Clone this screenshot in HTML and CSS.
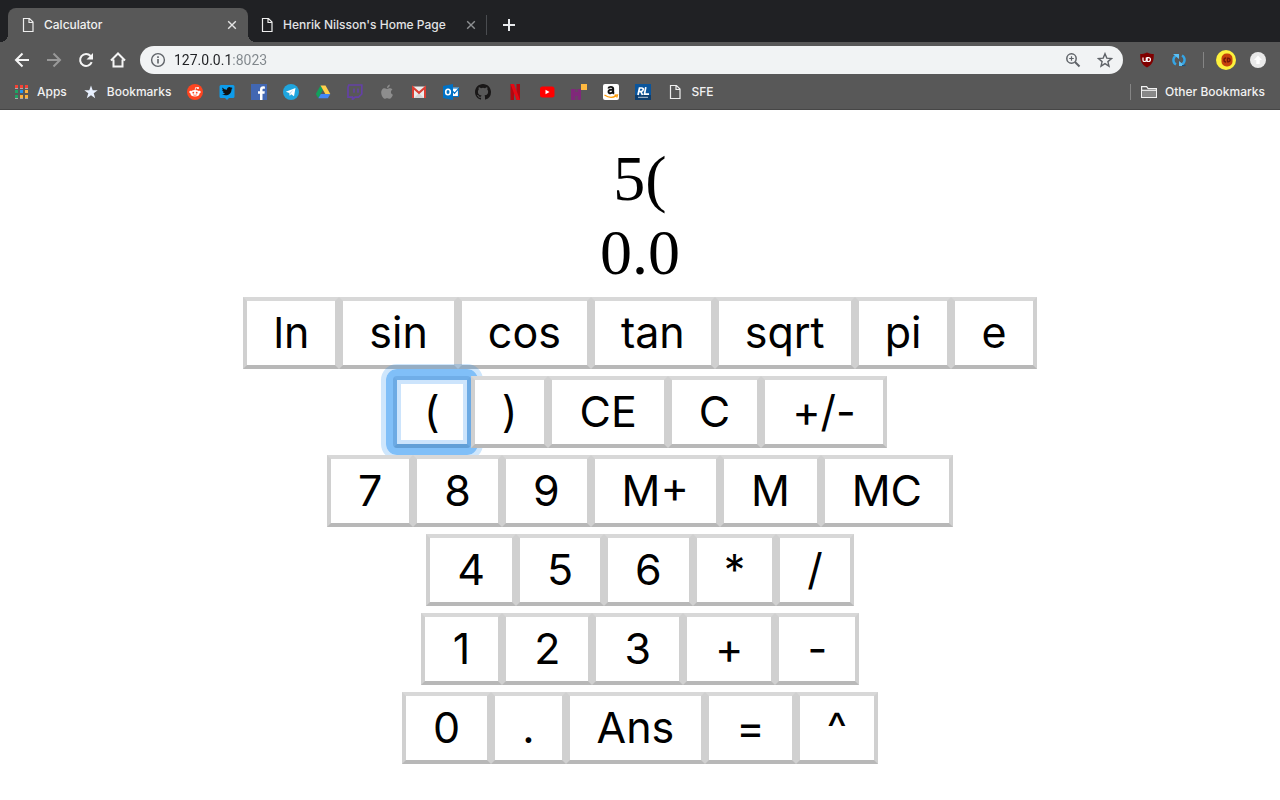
FILE: index.html
```html
<!DOCTYPE html>
<html lang="en">
<head>
<meta charset="utf-8">
<title>Calculator</title>
<link rel="stylesheet" href="styles.css">
</head>
<body>
<svg class="defs" aria-hidden="true">
  <symbol id="doc" viewBox="0 0 16 16"><path d="M3.5 1.5h6l3.500 3.500v9.500h-9.500zM9 1.500v4h4" fill="none" stroke="#eee" stroke-width="1.200"/></symbol>
  <symbol id="close" viewBox="0 0 16 16"><path d="M4.200 4.200l7.600 7.600M11.800 4.200l-7.600 7.600" fill="none" stroke="currentColor" stroke-width="1.400"/></symbol>
</svg>

<header class="browser">
  <nav class="tabs" aria-label="Tabs">
    <div class="tab tab-active">
      <svg class="icon"><use href="#doc"/></svg>
      <span class="tab-title">Calculator</span>
      <button class="icon-btn" aria-label="Close Calculator"><svg class="icon"><use href="#close"/></svg></button>
    </div>
    <div class="tab">
      <svg class="icon"><use href="#doc"/></svg>
      <span class="tab-title">Henrik Nilsson's Home Page</span>
      <button class="icon-btn dim" aria-label="Close Home Page"><svg class="icon"><use href="#close"/></svg></button>
    </div>
    <span class="divider"></span>
    <button class="icon-btn new-tab" aria-label="New tab"><svg class="icon" viewBox="0 0 16 16"><path d="M8 2v12M2 8h12" stroke="#e8eaed" stroke-width="2"/></svg></button>
  </nav>

  <div class="toolbar">
    <button class="icon-btn" aria-label="Back"><svg class="icon" viewBox="0 0 16 16"><path d="M15 8H2.500M8.500 1.500L2 8l6.500 6.500" fill="none" stroke="#f5f5f5" stroke-width="2"/></svg></button>
    <button class="icon-btn" aria-label="Forward"><svg class="icon" viewBox="0 0 16 16"><path d="M1 8h12.500M7.500 1.500L14 8l-6.500 6.500" fill="none" stroke="#999" stroke-width="2"/></svg></button>
    <button class="icon-btn" aria-label="Reload"><svg class="icon" viewBox="0 0 16 16"><path d="M13.700 10.200A6 6 0 1 1 12.600 4" fill="none" stroke="#f5f5f5" stroke-width="2"/><path d="M15 1v6.500H8.500z" fill="#f5f5f5"/></svg></button>
    <button class="icon-btn" aria-label="Home"><svg class="icon" viewBox="0 0 16 16"><path d="M1 8.500L8 1.500l7 7M3.500 7.500v7h9v-7" fill="none" stroke="#f5f5f5" stroke-width="2"/></svg></button>
    <div class="omnibox">
      <svg class="icon" viewBox="0 0 16 16"><circle cx="8" cy="8" r="6.400" fill="none" stroke="#5f6368" stroke-width="1.400"/><path d="M8 7v4.600M8 4.200v1.700" stroke="#5f6368" stroke-width="1.600"/></svg>
      <input class="address" type="text" aria-label="Address" value="127.0.0.1:8023">
      <button class="icon-btn" aria-label="Zoom"><svg class="icon" viewBox="0 0 16 16"><circle cx="6.500" cy="6.500" r="4.700" fill="none" stroke="#5f6368" stroke-width="1.500"/><path d="M10 10l4.500 4.500" stroke="#5f6368" stroke-width="2"/><path d="M6.500 4.200v4.600M4.200 6.500h4.600" stroke="#5f6368" stroke-width="1.200"/></svg></button>
      <button class="icon-btn" aria-label="Bookmark this page"><svg class="icon" viewBox="0 0 16 16"><path d="M8 1.700l1.800 4.400 4.700.4-3.600 3.100 1.100 4.600L8 11.700l-4 2.500 1.100-4.600L1.500 6.500l4.700-.4z" fill="none" stroke="#5f6368" stroke-width="1.400"/></svg></button>
    </div>
    <button class="icon-btn" aria-label="Content blocker"><svg class="icon" viewBox="0 0 16 16"><path d="M8 .5c2.500 1.500 4.500 1.500 6.800 1.500 0 7-.8 10-6.800 13.500C2 12 1.200 9 1.200 2 3.500 2 5.500 2 8 .5z" fill="#800000"/><path d="M4 5.500v2.700q0 1.300 1.600 1.300T7.300 8.200V5.500M8.200 5.600v3.900h1.300a1.950 1.950 0 0 0 0-3.900z" fill="none" stroke="#fff" stroke-width="1.200"/></svg></button>
    <button class="icon-btn" aria-label="Sync"><svg class="icon" viewBox="0 0 16 16"><path d="M5 12.500A5 5 0 0 1 5.500 3.500M11 3.500a5 5 0 0 1-.5 9" fill="none" stroke="#35a5e5" stroke-width="2.400"/><path d="M2 2h6v5zM14 14H8V9z" fill="#5bc0f5"/><path d="M11 13.500h3.500" stroke="#16517f" stroke-width="1.200"/></svg></button>
    <span class="divider short"></span>
    <button class="icon-btn avatar" aria-label="Profile"><svg class="icon-lg" viewBox="0 0 20 20"><circle cx="10" cy="10" r="10" fill="#fdf13c"/><rect x="5.500" y="3.500" width="11" height="13" rx="5" fill="#c5420c"/><path d="M10 8a2 2 0 1 0 0 4M11.500 8.200v3.600h.8a1.800 1.800 0 0 0 0-3.600z" fill="none" stroke="#741707" stroke-width="1.400"/></svg></button>
    <button class="icon-btn" aria-label="Update"><svg class="icon" viewBox="0 0 16 16"><circle cx="8" cy="8" r="8" fill="#e9e9e9"/><path d="M8 3.500l4 4.500H9.700v4H6.300V8H4z" fill="#fff"/></svg></button>
  </div>

  <nav class="bookmarks" aria-label="Bookmarks">
    <a class="mark" href="#"><svg class="icon" viewBox="0 0 16 16"><path d="M2 1h3v3H2zM7 1h3v3H7zM12 1h3v3h-3z" fill="#f44336"/><path d="M2 6h3v3H2z" fill="#1fa463"/><path d="M7 6h3v3H7z" fill="#2196f3"/><path d="M12 6h3v3h-3z" fill="#fbb13c"/><path d="M2 11h3v3H2z" fill="#1fa463"/><path d="M7 11h3v3H7zM12 11h3v3h-3z" fill="#fbb13c"/><path d="M2 4.500h3M7 4.500h3M12 4.500h3M2 14.500h3M7 14.500h3M12 14.500h3" stroke="#aaa"/></svg><span class="mark-text">Apps</span></a>
    <a class="mark" href="#"><svg class="icon" viewBox="0 0 16 16"><path d="M8 1.500l1.700 4.700 5 .1-4 3 1.500 4.900L8 11.300l-4.200 2.900 1.500-4.900-4-3 5-.1z" fill="#e8f0fe"/></svg><span class="mark-text">Bookmarks</span></a>
    <a class="mark" href="#" aria-label="Reddit"><svg class="icon" viewBox="0 0 16 16"><circle cx="8" cy="8" r="8" fill="#ff4520"/><ellipse cx="8" cy="9.300" rx="4.500" ry="3.200" fill="#fff"/><circle cx="3.500" cy="8" r="1.200" fill="#fff"/><circle cx="12.500" cy="8" r="1.200" fill="#fff"/><circle cx="11" cy="4" r="1" fill="#fff"/><path d="M8 6.500l.6-3 2.400.5" fill="none" stroke="#fff" stroke-width=".8"/><circle cx="6.300" cy="8.700" r=".9" fill="#ff4520"/><circle cx="9.700" cy="8.700" r=".9" fill="#ff4520"/><path d="M6.200 10.800q1.800 1.100 3.600 0" fill="none" stroke="#ff4520" stroke-width=".7"/></svg></a>
    <a class="mark" href="#" aria-label="Twitter"><svg class="icon" viewBox="0 0 16 16"><path d="M2 1h12q1.500 0 1.500 1.500v10q0 1.500-1.500 1.500h-4l-2 2-2-2H2Q.5 14 .5 12.500v-10Q.5 1 2 1z" fill="#0d9ceb"/><path d="M3.500 3.500c1.300 1.500 2.700 2.200 4.500 2.300-.2-3 3-3.400 4-2.100l1.300-.4-.7 1.200 1-.2-1.100 1.200c0 5.500-5.500 7-9.500 4.800 1.300 0 2.200-.2 3-.9-1.200-.2-1.700-.8-2-1.500h.9C3.700 7.300 3.300 6.700 3.200 5.700l.9.200C3.200 5.200 3.100 4.400 3.500 3.500z" fill="#111"/></svg></a>
    <a class="mark" href="#" aria-label="Facebook"><svg class="icon" viewBox="0 0 16 16"><path d="M0 0h16v16H0z" fill="#4267b2"/><path d="M9 16V9.800H7V7.300h2V5.500C9 3.300 10.300 2.300 12.200 2.300l1.700.1v2.300h-1.200c-1 0-1.200.5-1.200 1.200v1.400h2.300l-.3 2.500h-2V16z" fill="#fff"/></svg></a>
    <a class="mark" href="#" aria-label="Telegram"><svg class="icon" viewBox="0 0 16 16"><circle cx="8" cy="8" r="8" fill="#1fa5de"/><path d="M2.800 7.800L12.500 3.900 11 12.200 8.200 10.200 6.800 11.700 6.300 9z" fill="#fff"/><path d="M6.300 9l4.200-3.200-3 3.700-.7 2.200z" fill="#b5d9ed"/></svg></a>
    <a class="mark" href="#" aria-label="Drive"><svg class="icon" viewBox="0 0 16 16"><path d="M5.500 1.500L.8 10l2.500 4.300L8 5.700z" fill="#12a05c"/><path d="M5.500 1.500h5l4.800 8.500h-5z" fill="#ffcf4a"/><path d="M5.800 10h9.500l-2.500 4.300H3.300z" fill="#4387f5"/></svg></a>
    <a class="mark" href="#" aria-label="Twitch"><svg class="icon" viewBox="0 0 16 16"><path d="M1.800 1h13v9l-3.300 3.200H8L5.500 15.500v-2.300H1V3.500z" fill="none" stroke="#6441a5" stroke-width="1.700"/><path d="M7 4.500v4.300M11 4.500v4.300" stroke="#6441a5" stroke-width="1.500"/></svg></a>
    <a class="mark" href="#" aria-label="Apple"><svg class="icon" viewBox="0 0 16 16"><path d="M8 5C9.500 4.500 10.200 4 11.500 4.300q1.300.2 2 1.200c-2.300 1.300-2 4.300.4 5.200-.7 2-2 4-3.400 4-1 0-1.300-.5-2.400-.5s-1.500.5-2.400.5c-1.800 0-5-5.800-2.700-9C4.200 4 5.800 4 8 5zM8 4c0-2 1.200-3.300 2.800-3.600C11 2.400 9.700 4 8 4z" fill="#8e8e8e"/></svg></a>
    <a class="mark" href="#" aria-label="Gmail"><svg class="icon" viewBox="0 0 16 16"><path d="M1 2.500h14v11.500H1z" fill="#ececec"/><path d="M3 14l5-5 5 5z" fill="#d5d5d5"/><path d="M2 14V3.500l6 5.300 6-5.300V14" fill="none" stroke="#d93f34" stroke-width="2"/></svg></a>
    <a class="mark" href="#" aria-label="Outlook"><svg class="icon" viewBox="0 0 16 16"><path d="M9 3.500h7v9H9z" fill="#fff"/><path d="M9 4h7M9.500 7l2 2.300L16 4.200M15.500 4v8.500H9" fill="none" stroke="#0072c6" stroke-width="1.200"/><path d="M0 2l10-2v16L0 14z" fill="#0072c6"/><ellipse cx="5" cy="8" rx="2.300" ry="2.800" fill="none" stroke="#fff" stroke-width="1.600"/></svg></a>
    <a class="mark" href="#" aria-label="GitHub"><svg class="icon" viewBox="0 0 16 16"><path d="M8 0C3.580 0 0 3.580 0 8c0 3.540 2.290 6.530 5.470 7.590.4.070.55-.17.550-.38 0-.19-.010-.82-.010-1.490-2.010.37-2.530-.49-2.690-.94-.09-.23-.48-.94-.82-1.130-.28-.15-.68-.52-.010-.53.63-.010 1.080.58 1.230.82.72 1.210 1.870.87 2.330.66.070-.52.280-.87.510-1.070-1.780-.2-3.640-.89-3.640-3.950 0-.87.310-1.590.82-2.150-.08-.2-.36-1.020.080-2.120 0 0 .67-.21 2.200.82a7.600 7.600 0 0 1 4 0c1.530-1.040 2.200-.82 2.200-.82.44 1.100.16 1.920.080 2.120.51.560.82 1.270.82 2.150 0 3.070-1.870 3.750-3.650 3.950.29.250.54.730.54 1.480 0 1.070-.010 1.930-.010 2.200 0 .21.150.46.550.38A8 8 0 0 0 16 8c0-4.420-3.580-8-8-8z" fill="#191717"/></svg></a>
    <a class="mark" href="#" aria-label="Netflix"><svg class="icon" viewBox="0 0 16 16"><path d="M3.500 0H7v16H3.500zM9.500 0H13v16H9.500z" fill="#b20710"/><path d="M3.500 0H7l6 16H9.500z" fill="#e50914"/></svg></a>
    <a class="mark" href="#" aria-label="YouTube"><svg class="icon" viewBox="0 0 16 16"><rect x="1" y="2.500" width="14.500" height="11" rx="2.500" fill="#f00"/><path d="M6.500 5.800v4.400L10.500 8z" fill="#fff"/></svg></a>
    <a class="mark" href="#" aria-label="Pixels"><svg class="icon" viewBox="0 0 16 16"><path d="M10 0h6v6h-6z" fill="#ffb940"/><path d="M0 5h4v3h3V5h3v11H7v-4H4v4H0z" fill="#80287a"/><path d="M4 5h3v3H4zM4 12h3v4H4z" fill="#6b3f68"/></svg></a>
    <a class="mark" href="#" aria-label="Amazon"><svg class="icon" viewBox="0 0 16 16"><rect width="16" height="16" rx="2" fill="#fff"/><path d="M5.300 4.400c.6-2 4.700-2.100 4.900.2v3.700q0 .8.800 1.400M10 5.500c-2.500 0-4.500.5-4.500 2.300 0 2.200 3.500 2 4.500-.5" fill="none" stroke="#111" stroke-width="1.900"/><path d="M1.500 11q6 4.200 11.500.9M11.500 11.200l3-.2-.8 2.500" fill="none" stroke="#ff9900" stroke-width="1.300"/></svg></a>
    <a class="mark" href="#" aria-label="RL"><svg class="icon" viewBox="0 0 16 16"><path d="M0 0h16v16H0z" fill="#0a559c"/><path d="M0 11h16v5H0z" fill="#0b3e70"/><path d="M3 11L4.500 4h2.300q1.700 0 1.400 1.700T6.200 7.500H4M6 7.800L7.500 11M10.800 3.200L9.500 10.200h4.500" fill="none" stroke="#fff" stroke-width="1.700"/><path d="M3 13.300h10" stroke="#b8c6d5" stroke-width="1"/></svg></a>
    <a class="mark" href="#"><svg class="icon"><use href="#doc"/></svg><span class="mark-text">SFE</span></a>
    <span class="divider short push"></span>
    <a class="mark other" href="#"><svg class="icon" viewBox="0 0 16 16"><path d="M.6 13.400V2.600h5l1.500 2h8.300v8.800z" fill="none" stroke="#f1f1f1" stroke-width="1.200"/><path d="M1.200 7h13.600v5.800H1.200z" fill="#888"/><path d="M1 6.300h14" stroke="#f1f1f1" stroke-width="1.200"/></svg><span class="mark-text">Other Bookmarks</span></a>
  </nav>
</header>

<main class="calculator">
  <output class="display">5(</output>
  <output class="display">0.0</output>
  <div class="keys">
    <div class="row row-functions"><button class="key">ln</button><button class="key">sin</button><button class="key">cos</button><button class="key">tan</button><button class="key">sqrt</button><button class="key">pi</button><button class="key">e</button></div>
    <div class="row"><button class="key key-focused">(</button><button class="key">)</button><button class="key">CE</button><button class="key">C</button><button class="key">+/-</button></div>
    <div class="row"><button class="key">7</button><button class="key">8</button><button class="key">9</button><button class="key">M+</button><button class="key">M</button><button class="key">MC</button></div>
    <div class="row"><button class="key">4</button><button class="key">5</button><button class="key">6</button><button class="key">*</button><button class="key">/</button></div>
    <div class="row row-roomy"><button class="key">1</button><button class="key">2</button><button class="key">3</button><button class="key">+</button><button class="key">-</button></div>
    <div class="row"><button class="key">0</button><button class="key">.</button><button class="key">Ans</button><button class="key">=</button><button class="key">^</button></div>
  </div>
</main>
</body>
</html>
```
FILE: styles.css
```css
* { box-sizing: border-box; }

body {
  margin: 0;
  background: #fff;
  color: #000;
  font-family: Inter, "Liberation Sans", sans-serif;
}

.defs { display: none; }

/* Browser frame */
.browser {
  background: #585858;
  border-bottom: 1px solid #464646;
  color: #f1f1f1;
  font-size: 12px;
  font-weight: 500;
}

.icon { display: block; width: 16px; height: 16px; flex: none; }
.icon-lg { display: block; width: 20px; height: 20px; }

.icon-btn {
  display: block;
  flex: none;
  margin: 0;
  padding: 0;
  border: 0;
  background: none;
  color: #e4e4e4;
}
.dim { color: #8d8f92; }

.divider { width: 1px; height: 20px; background: #4a4c50; }
.short { height: 16px; background: #858585; }

.tabs {
  display: flex;
  align-items: center;
  height: 42px;
  padding: 8px 8px 0;
  background: #202124;
}
.tab {
  position: relative;
  display: flex;
  align-items: center;
  gap: 8px;
  width: 240px;
  height: 34px;
  padding: 0 8px 0 12px;
  color: #e2e3e5;
}
.tab + .tab { width: 238px; padding-left: 11px; padding-right: 7px; }
.tab-active { background: #585858; border-radius: 8px 8px 0 0; color: #f1f1f1; }
.tab-active::before,
.tab-active::after {
  content: "";
  position: absolute;
  bottom: 0;
  width: 8px;
  height: 8px;
}
.tab-active::before { right: 100%; background: radial-gradient(circle at 0 0, transparent 8px, #585858 8px); }
.tab-active::after { left: 100%; background: radial-gradient(circle at 100% 0, transparent 8px, #585858 8px); }
.tab-title { flex: 1; padding-bottom: 2px; white-space: nowrap; }
.new-tab { margin-left: 14px; }

.toolbar {
  display: flex;
  align-items: center;
  gap: 16px;
  height: 36px;
  padding: 0 14px;
}
.omnibox {
  display: flex;
  flex: 1;
  align-items: center;
  gap: 16px;
  height: 28px;
  margin-left: -2px;
  padding: 0 10px;
  border-radius: 14px;
  background: #f1f3f4;
}
.address {
  flex: 1;
  min-width: 0;
  margin-left: -8px;
  padding: 0;
  border: 0;
  outline: 0;
  background: linear-gradient(90deg, #202124 58px, #80868b 58px);
  -webkit-background-clip: text;
  background-clip: text;
  -webkit-text-fill-color: transparent;
  font: 14px/20px Roboto, sans-serif;
}
.avatar { margin: 0 -2px 0 -4px; }

.bookmarks {
  display: flex;
  align-items: center;
  gap: 16px;
  height: 31px;
  padding: 0 15px 3px 13px;
}
.mark {
  display: flex;
  align-items: center;
  gap: 8px;
  color: inherit;
  text-decoration: none;
  white-space: nowrap;
}
.mark-text { padding-bottom: 2px; }
.push { margin-left: auto; }
.other { margin-left: -6px; }

/* Calculator */
.calculator { padding: 32px 16px; text-align: center; }
.display {
  display: block;
  font: 64px/74px "Liberation Serif", "Times New Roman", serif;
}
.keys {
  display: flex;
  flex-direction: column;
  gap: 7px;
  padding-top: 7px;
}
.row { display: flex; justify-content: center; }
.key {
  height: 72px;
  margin: 0;
  padding: 0 27px 2px;
  border: 4px solid;
  border-color: #d8d8d8 #d0d0d0 #b8b8b8;
  border-radius: 0;
  background: #fff;
  color: #000;
  font: 43px/52px Inter, "Liberation Sans", sans-serif;
}
.row-functions .key { padding-left: 26px; padding-right: 26px; }
.row-roomy .key { padding-left: 28px; padding-right: 28px; }
.key,
.row + .row { position: relative; }

/* Two-tone focus halo, overlapped by the keys that follow */
.key-focused {
  border-color: #70aee8 #6caae4 #629fd7;
  box-shadow: inset 0 0 0 4px #cce4fc;
}
.key-focused::before,
.key-focused::after {
  content: "";
  position: absolute;
  pointer-events: none;
}
.key-focused::before {
  inset: -16px;
  border: 5px solid rgba(10, 128, 240, 0.2);
  border-radius: 16px;
}
.key-focused::after {
  inset: -11px;
  border: 7px solid #80bff8;
  border-radius: 11px;
}
.row-functions .key { z-index: auto; }
```
